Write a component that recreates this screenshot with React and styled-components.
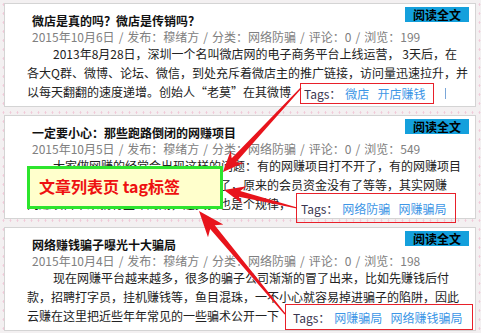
import styled, {createGlobalStyle} from "styled-components"

const GlobalStyle = createGlobalStyle`
    body {
        margin: 0;
        background: #f4f1f2;
        font-family: "Noto Sans CJK SC", "Noto Sans", sans-serif;
    }
`

const Page = styled.div`
    position: relative;
    width: 481px;
    height: 333px;
    overflow: hidden;
    box-sizing: border-box;
    padding: 3px 5px 0 4px;
    display: flex;
    flex-direction: column;
    gap: 8px;
    background-color: #f3f0f1;
    background-image: radial-gradient(#f1c9d8 0.7px, transparent 1.2px);
    background-size: 7px 9px;
`

const Card = styled.div`
    position: relative;
    flex: none;
    height: 104px;
    box-sizing: border-box;
    background: #fff;
    border: 1px solid #d4d4d4;
    padding: 3px 6px 0 22px;
`

const Header = styled.div`
    display: flex;
    justify-content: space-between;
    align-items: flex-start;
`

const Title = styled.div`
    margin: 5px 0 0 5px;
    font-size: 12px;
    font-weight: bold;
    line-height: 17px;
    color: #111;
`

const ReadMore = styled.a`
    flex: none;
    background: #14a0dc;
    color: #000;
    font-size: 12px;
    font-weight: bold;
    line-height: 15px;
    padding: 0 8px;
    text-decoration: none;
`

const Meta = styled.div`
    margin-left: 5px;
    font-size: 12px;
    line-height: 15px;
    color: #808080;
    white-space: nowrap;

    span {
        margin: 0 4px;
    }
`

const Body = styled.p`
    margin: 0;
    font-size: 12px;
    line-height: 19px;
    color: #222;
    white-space: nowrap;
    text-indent: 26px;
`

const TagsBox = styled.div`
    position: absolute;
    left: ${p => p.$left}px;
    top: ${p => p.$top}px;
    width: ${p => p.$width}px;
    height: ${p => p.$height}px;
    box-sizing: border-box;
    border: 1.5px solid #e8202a;
    padding-left: ${p => p.$pad}px;
    display: flex;
    align-items: center;
    gap: 8px;
    font-size: 12px;
    white-space: nowrap;
`

const TagsLabel = styled.span`
    color: #3a3550;
    margin-right: -4px;
`

const Tag = styled.a`
    color: #3d96e6;
    text-decoration: none;
`

const Divider = styled.i`
    position: absolute;
    left: calc(100% + 12px);
    top: 4px;
    width: 1px;
    height: 11px;
    background: #7aa6d8;
`

const Label = styled.div`
    position: absolute;
    left: 27px;
    top: 166px;
    width: 196px;
    height: 43px;
    box-sizing: border-box;
    border: 3px solid #2de52d;
    background: #ffffcc;
    padding: 0 0 3px 9px;
    display: flex;
    align-items: center;
    color: #ee1111;
    font-size: 16px;
    font-weight: bold;
    white-space: nowrap;
`

const Arrows = styled.svg`
    position: absolute;
    left: 0;
    top: 0;
    pointer-events: none;
`

const posts = [
    {
        title: "微店是真的吗？微店是传销吗？",
        date: "2015年10月6日",
        views: 199,
        lines: [
            "2013年8月28日，深圳一个名叫微店网的电子商务平台上线运营， 3天后，在",
            "各大Q群、微博、论坛、微信，到处充斥着微店主的推广链接，访问量迅速拉升，并",
            "以每天翻翻的速度递增。创始人“老莫”在其微博",
        ],
        tags: ["微店", "开店赚钱"],
        box: {left: 295, top: 79, width: 134, height: 21, pad: 3},
        divider: true,
    },
    {
        title: "一定要小心：那些跑路倒闭的网赚项目",
        date: "2015年10月5日",
        views: 549,
        lines: [
            "大家做网赚的经常会出现这样的问题：有的网赚项目打不开了，有的网赚项目",
            "还有的网站连域名都不续费直接关站了，原来的会员资金没有了等等，其实网赚",
            "网赚项目本来就有生命周期，这其实也是个规律，",
        ],
        tags: ["网络防骗", "网赚骗局"],
        box: {left: 291, top: 77, width: 160, height: 30, pad: 4},
    },
    {
        title: "网络赚钱骗子曝光十大骗局",
        date: "2015年10月4日",
        views: 198,
        lines: [
            "现在网赚平台越来越多，很多的骗子公司渐渐的冒了出来，比如先赚钱后付",
            "款，招聘打字员，挂机赚钱等，鱼目混珠，一不小心就容易掉进骗子的陷阱，因此",
            "云赚在这里把近些年年常见的一些骗术公开一下",
        ],
        tags: ["网赚骗局", "网络赚钱骗局"],
        box: {left: 280, top: 76, width: 188, height: 26, pad: 7},
    },
]

// tapered screenshot-tool arrow: thin tail at (x1,y1), head at (x2,y2)
const Arrow = ({x1, y1, x2, y2, len = 21, wing = 9}) => {
    const a = Math.atan2(y2 - y1, x2 - x1)
    const c = Math.cos(a)
    const s = Math.sin(a)
    const neck = 3
    const bx = x2 - c * len
    const by = y2 - s * len
    const nx = x2 - c * (len - 5)
    const ny = y2 - s * (len - 5)
    const pts = [
        [x1 - s * 0.6, y1 + c * 0.6],
        [nx - s * neck, ny + c * neck],
        [bx - s * wing, by + c * wing],
        [x2, y2],
        [bx + s * wing, by - c * wing],
        [nx + s * neck, ny - c * neck],
        [x1 + s * 0.6, y1 - c * 0.6],
    ]
    return <polygon points={pts.map(p => p.join(",")).join(" ")} fill="#e8141c"/>
}

export default function App() {
    return (
        <Page>
            <GlobalStyle/>
            {posts.map(post => (
                <Card key={post.title}>
                    <Header>
                        <Title>{post.title}</Title>
                        <ReadMore href="#">阅读全文</ReadMore>
                    </Header>
                    <Meta>
                        {post.date}<span>/</span>发布：穆绪方<span>/</span>分类：网络防骗<span>/</span>评论：0<span>/</span>浏览：{post.views}
                    </Meta>
                    <Body>
                        {post.lines.map((l, i) => (
                            <span key={i}>{i > 0 && <br/>}{l}</span>
                        ))}
                    </Body>
                    <TagsBox $left={post.box.left} $top={post.box.top} $width={post.box.width}
                             $height={post.box.height} $pad={post.box.pad}>
                        <TagsLabel>Tags：</TagsLabel>
                        {post.tags.map(t => <Tag key={t} href="#">{t}</Tag>)}
                        {post.divider && <Divider/>}
                    </TagsBox>
                </Card>
            ))}
            <Label>文章列表页 tag标签</Label>
            <Arrows width="481" height="333">
                <Arrow x1={301} y1={88} x2={223} y2={172}/>
                <Arrow x1={297} y1={208} x2={224} y2={190}/>
                <Arrow x1={285} y1={314} x2={199} y2={211} len={26} wing={10}/>
            </Arrows>
        </Page>
    )
}
